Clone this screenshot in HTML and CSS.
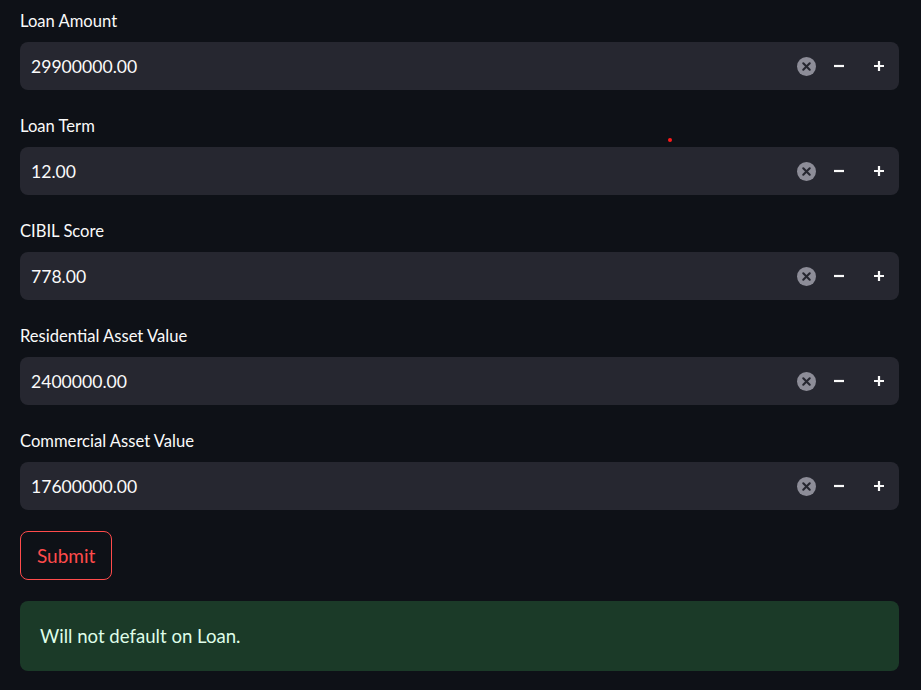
FILE: index.html
```html
<!DOCTYPE html>
<html>
<head>
<meta charset="utf-8">
<link rel="stylesheet" href="styles.css">
</head>
<body>
<div class="app">
  <div class="field">
    <label class="label">Loan Amount</label>
    <div class="input">
      <span class="value">29900000.00</span>
      <span class="clear"><svg width="19" height="19" viewBox="0 0 20 20"><circle cx="10" cy="10" r="10" fill="#8d8d98"/><path d="M6.6 6.6l6.8 6.8M13.4 6.6l-6.8 6.8" stroke="#262730" stroke-width="2.2" stroke-linecap="round"/></svg></span>
      <span class="step"><svg width="12" height="12" viewBox="0 0 12 12"><path d="M1 6h10" stroke="#fafafa" stroke-width="2.2"/></svg></span>
      <span class="step"><svg width="12" height="12" viewBox="0 0 12 12"><path d="M1 6h10M6 1v10" stroke="#fafafa" stroke-width="2.2"/></svg></span>
    </div>
  </div>
  <div class="field">
    <label class="label">Loan Term</label>
    <div class="input">
      <span class="value">12.00</span>
      <span class="clear"><svg width="19" height="19" viewBox="0 0 20 20"><circle cx="10" cy="10" r="10" fill="#8d8d98"/><path d="M6.6 6.6l6.8 6.8M13.4 6.6l-6.8 6.8" stroke="#262730" stroke-width="2.2" stroke-linecap="round"/></svg></span>
      <span class="step"><svg width="12" height="12" viewBox="0 0 12 12"><path d="M1 6h10" stroke="#fafafa" stroke-width="2.2"/></svg></span>
      <span class="step"><svg width="12" height="12" viewBox="0 0 12 12"><path d="M1 6h10M6 1v10" stroke="#fafafa" stroke-width="2.2"/></svg></span>
    </div>
    <span class="dot"></span>
  </div>
  <div class="field">
    <label class="label">CIBIL Score</label>
    <div class="input">
      <span class="value">778.00</span>
      <span class="clear"><svg width="19" height="19" viewBox="0 0 20 20"><circle cx="10" cy="10" r="10" fill="#8d8d98"/><path d="M6.6 6.6l6.8 6.8M13.4 6.6l-6.8 6.8" stroke="#262730" stroke-width="2.2" stroke-linecap="round"/></svg></span>
      <span class="step"><svg width="12" height="12" viewBox="0 0 12 12"><path d="M1 6h10" stroke="#fafafa" stroke-width="2.2"/></svg></span>
      <span class="step"><svg width="12" height="12" viewBox="0 0 12 12"><path d="M1 6h10M6 1v10" stroke="#fafafa" stroke-width="2.2"/></svg></span>
    </div>
  </div>
  <div class="field">
    <label class="label">Residential Asset Value</label>
    <div class="input">
      <span class="value">2400000.00</span>
      <span class="clear"><svg width="19" height="19" viewBox="0 0 20 20"><circle cx="10" cy="10" r="10" fill="#8d8d98"/><path d="M6.6 6.6l6.8 6.8M13.4 6.6l-6.8 6.8" stroke="#262730" stroke-width="2.2" stroke-linecap="round"/></svg></span>
      <span class="step"><svg width="12" height="12" viewBox="0 0 12 12"><path d="M1 6h10" stroke="#fafafa" stroke-width="2.2"/></svg></span>
      <span class="step"><svg width="12" height="12" viewBox="0 0 12 12"><path d="M1 6h10M6 1v10" stroke="#fafafa" stroke-width="2.2"/></svg></span>
    </div>
  </div>
  <div class="field">
    <label class="label">Commercial Asset Value</label>
    <div class="input">
      <span class="value">17600000.00</span>
      <span class="clear"><svg width="19" height="19" viewBox="0 0 20 20"><circle cx="10" cy="10" r="10" fill="#8d8d98"/><path d="M6.6 6.6l6.8 6.8M13.4 6.6l-6.8 6.8" stroke="#262730" stroke-width="2.2" stroke-linecap="round"/></svg></span>
      <span class="step"><svg width="12" height="12" viewBox="0 0 12 12"><path d="M1 6h10" stroke="#fafafa" stroke-width="2.2"/></svg></span>
      <span class="step"><svg width="12" height="12" viewBox="0 0 12 12"><path d="M1 6h10M6 1v10" stroke="#fafafa" stroke-width="2.2"/></svg></span>
    </div>
  </div>
  <div class="actions">
    <button class="submit">Submit</button>
  </div>
  <div class="success">Will not default on Loan.</div>
</div>
</body>
</html>
```
FILE: styles.css
```css
html, body {
  margin: 0;
  padding: 0;
  background: #0e1117;
}
body {
  font-family: "Lato", "Noto Sans", sans-serif;
  color: #fafafa;
}
.app {
  width: 879px;
  padding: 0 20px 19px 20px;
  display: flex;
  flex-direction: column;
  gap: 15px;
}
.field {
  position: relative;
  display: flex;
  flex-direction: column;
}
.label {
  height: 42px;
  display: flex;
  align-items: center;
  font-size: 16.6px;
  line-height: 20px;
  color: #fafafa;
}
.input {
  height: 48px;
  background: #262730;
  border-radius: 8px;
  display: flex;
  align-items: center;
  padding-left: 11px;
}
.value {
  flex: 1;
  font-size: 17.6px;
  color: #fafafa;
}
.clear {
  display: flex;
  align-items: center;
  justify-content: center;
  width: 20px;
  margin-right: 3px;
}
.step {
  width: 40px;
  height: 48px;
  display: flex;
  align-items: center;
  justify-content: center;
}
.dot {
  position: absolute;
  left: 648px;
  top: 33px;
  width: 4px;
  height: 4px;
  border-radius: 50%;
  background: #ff1a1a;
}
.actions {
  padding-top: 6px;
  display: flex;
}
.submit {
  height: 49px;
  padding: 0 16px;
  background: #0e1117;
  border: 1px solid #ff4b4b;
  border-radius: 8px;
  color: #ff4b4b;
  font-family: "Lato", "Noto Sans", sans-serif;
  font-size: 19px;
}
.success {
  margin-top: 6px;
  height: 70px;
  box-sizing: border-box;
  background: #1b3a28;
  border-radius: 8px;
  padding: 0 20px;
  display: flex;
  align-items: center;
  font-size: 18.6px;
  color: #dffde9;
}
```
